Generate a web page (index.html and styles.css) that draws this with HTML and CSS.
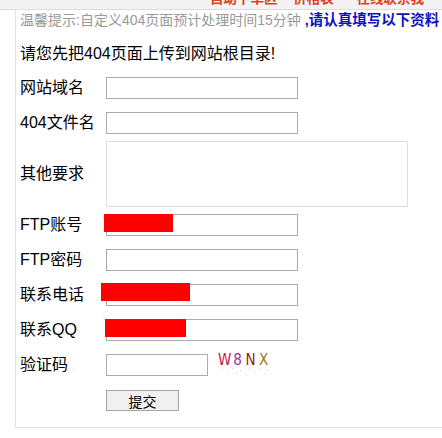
FILE: index.html
```html
<!DOCTYPE html>
<html>
<head>
  <title>自定义404页面</title>
  <meta charset="utf-8">
  <link rel="stylesheet" href="styles.css">
</head>
<body>
  <div class="topbar">
    <div class="topbar-links">
      <span>自助下单区</span>
      <span>价格表</span>
      <span>在线联系我</span>
    </div>
  </div>

  <div class="panel">
    <p class="notice">温馨提示:自定义404页面预计处理时间15分钟 <b>,请认真填写以下资料</b></p>
    <h3 class="lead">请您先把404页面上传到网站根目录!</h3>

    <form class="form">
      <div class="row">
        <label>网站域名</label>
        <input type="text" class="field">
      </div>
      <div class="row">
        <label>404文件名</label>
        <input type="text" class="field">
      </div>
      <div class="row row-area">
        <label>其他要求</label>
        <textarea class="area"></textarea>
      </div>
      <div class="row">
        <label>FTP账号</label>
        <span class="wrap">
          <input type="text" class="field">
          <i class="mask mask-ftp"></i>
        </span>
      </div>
      <div class="row">
        <label>FTP密码</label>
        <input type="password" class="field">
      </div>
      <div class="row">
        <label>联系电话</label>
        <span class="wrap">
          <input type="text" class="field">
          <i class="mask mask-tel"></i>
        </span>
      </div>
      <div class="row">
        <label>联系QQ</label>
        <span class="wrap">
          <input type="text" class="field">
          <i class="mask mask-qq"></i>
        </span>
      </div>
      <div class="row">
        <label>验证码</label>
        <input type="text" class="field field-code">
        <span class="captcha">
          <span class="c1">W</span><span class="c2">8</span><span class="c3">N</span><span class="c4">X</span>
          <svg class="noise" width="52" height="9" viewBox="0 0 52 9">
            <rect x="3" y="2" width="1" height="1" fill="#ccc"/>
            <rect x="9" y="5" width="1" height="1" fill="#ddd"/>
            <rect x="14" y="1" width="1" height="1" fill="#ccc"/>
            <rect x="18" y="6" width="1" height="1" fill="#ddd"/>
            <rect x="22" y="3" width="1" height="1" fill="#ccc"/>
            <rect x="27" y="7" width="1" height="1" fill="#ddd"/>
            <rect x="31" y="2" width="1" height="1" fill="#ccc"/>
            <rect x="36" y="5" width="1" height="1" fill="#ddd"/>
            <rect x="41" y="1" width="1" height="1" fill="#ccc"/>
            <rect x="46" y="6" width="1" height="1" fill="#ddd"/>
            <rect x="49" y="3" width="1" height="1" fill="#ccc"/>
          </svg>
        </span>
      </div>
      <div class="row row-btn">
        <button type="button" class="submit">提交</button>
      </div>
    </form>
  </div>
</body>
</html>
```

FILE: styles.css
```css
body {
  margin: 0;
  font-family: "Liberation Sans", "Noto Sans CJK SC", sans-serif;
  color: #000;
  background-color: #fff;
}
.topbar {
  height: 9px;
  overflow: hidden;
  background-color: #f3f3f3;
  border-bottom: 1px solid #dcdcdc;
}
.topbar-links {
  margin: -10px 0 0 210px;
  font-size: 13.5px;
  font-weight: bold;
  line-height: 18px;
  color: #e0401c;
  white-space: nowrap;
}
.topbar-links span + span {
  margin-left: 12px;
}
.topbar-links span:last-child {
  margin-left: 19px;
}
.panel {
  margin-left: 15px;
  padding: 0 0 16px 4px;
  border-left: 1px solid #e2e2e2;
  border-bottom: 1px solid #e2e2e2;
  overflow: hidden;
}
.notice {
  margin: 0;
  font-size: 14px;
  line-height: 20px;
  color: #999;
  white-space: nowrap;
}
.notice b {
  font-size: 14.5px;
  color: #1111c4;
}
.lead {
  margin: 12px 0 0;
  font-size: 16px;
  font-weight: normal;
  line-height: 24px;
}
.form {
  margin-top: 5px;
}
.row {
  display: flex;
  align-items: center;
  padding: 6px 0 7px;
}
.row label {
  width: 86px;
  font-size: 16px;
  line-height: 20px;
  flex-shrink: 0;
}
.row-area {
  padding: 0 0 1px;
}
.row-btn {
  padding: 7px 0 0 86px;
}
.field {
  box-sizing: border-box;
  width: 192px;
  height: 22px;
  margin: 0;
  border: 1px solid #ababab;
  padding: 0 3px;
  display: block;
}
.field-code {
  width: 102px;
}
.area {
  box-sizing: border-box;
  width: 302px;
  height: 66px;
  margin: 0;
  border: 1px solid #dedede;
  resize: none;
  display: block;
}
.wrap {
  position: relative;
  display: block;
}
.mask {
  position: absolute;
  height: 18px;
  background-color: #ff0000;
}
.mask-ftp {
  left: -2px;
  top: 0;
  width: 69px;
}
.mask-tel {
  left: -5px;
  top: -1px;
  width: 89px;
}
.mask-qq {
  left: -1px;
  top: 0;
  width: 81px;
}
.captcha {
  margin-left: 10px;
  height: 22px;
  width: 54px;
  font-family: "Liberation Sans Narrow", "DejaVu Sans", sans-serif;
  font-stretch: condensed;
  font-size: 15px;
  line-height: 13px;
  align-self: flex-start;
  white-space: nowrap;
}
.captcha span {
  display: inline-block;
  width: 13px;
  text-align: center;
}
.c1 { color: #cc1144; }
.c2 { color: #993399; }
.c3 { color: #992211; }
.c4 { color: #99771a; }
.noise {
  display: block;
}
.submit {
  width: 73px;
  height: 21px;
  padding: 0;
  font-size: 14px;
  font-family: "Liberation Sans", "Noto Sans CJK SC", sans-serif;
  background-color: #f0f0f0;
  border: 1px solid #a5a5a5;
  border-radius: 0;
}
```
